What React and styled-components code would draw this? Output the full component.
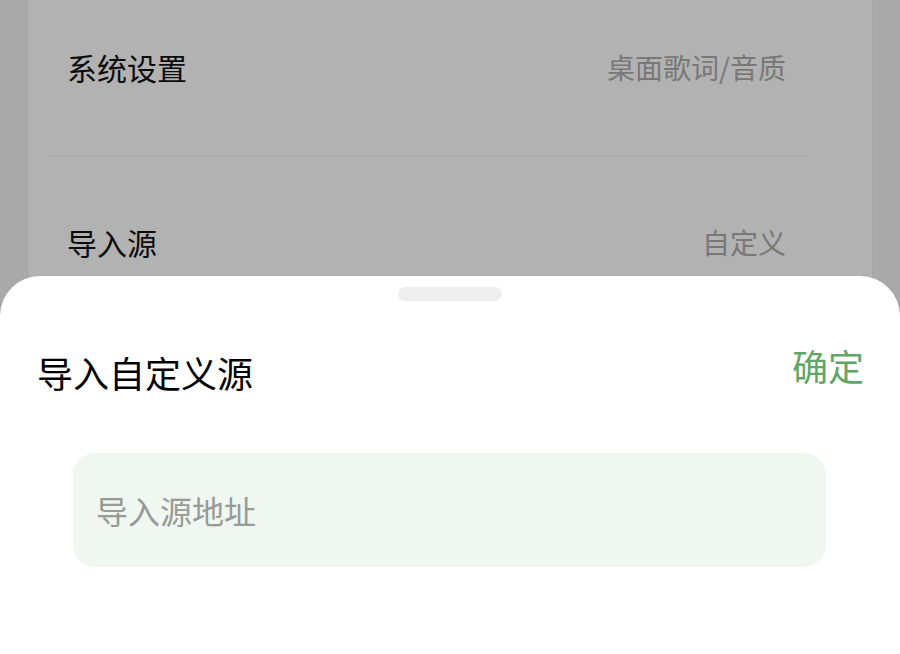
import React from "react";
import styled, { createGlobalStyle } from "styled-components";

const GlobalStyle = createGlobalStyle`
  html, body {
    margin: 0;
    padding: 0;
    height: 100%;
    overflow: hidden;
    background: #f3f3f3;
    font-family: "Noto Sans CJK SC", "Noto Sans", sans-serif;
  }
`;

const settings = [
  { label: "系统设置", value: "桌面歌词/音质" },
  { label: "导入源", value: "自定义" },
];

function App() {
  return (
    <>
      <GlobalStyle />
      <Page>
        <Card>
          {settings.map((item, i) => (
            <React.Fragment key={item.label}>
              {i > 0 && <Divider />}
              <Row first={i === 0}>
                <Label>{item.label}</Label>
                <Value>{item.value}</Value>
              </Row>
            </React.Fragment>
          ))}
        </Card>
      </Page>

      <Overlay />
      <Sheet>
        <Handle />
        <Header>
          <Title>导入自定义源</Title>
          <Confirm type="button">确定</Confirm>
        </Header>
        <Field type="text" placeholder="导入源地址" />
      </Sheet>
    </>
  );
}

const Page = styled.div`
  padding: 0 28px;
  height: 654px;
`;

const Card = styled.div`
  background: #ffffff;
  height: 100%;
  box-shadow: 0 0 0 1px #ececec;
`;

const Row = styled.div`
  display: flex;
  justify-content: space-between;
  align-items: center;
  padding: ${(p) => (p.first ? "52px 86px 73px 39px" : "70px 86px 80px 39px")};
`;

const Label = styled.span`
  font-size: 30px;
  line-height: 1;
  color: #111111;
`;

const Value = styled.span`
  font-size: 28px;
  line-height: 1;
  color: #acacac;
`;

const Divider = styled.div`
  height: 2px;
  margin: 0 66px 0 20px;
  background: #f4f4f4;
`;

const Overlay = styled.div`
  position: fixed;
  inset: 0;
  background: rgba(0, 0, 0, 0.3);
`;

const Sheet = styled.div`
  position: fixed;
  left: 0;
  right: 0;
  bottom: 0;
  top: 276px;
  background: #ffffff;
  border-radius: 40px 40px 0 0;
  display: flex;
  flex-direction: column;
  padding-top: 11px;
`;

const Handle = styled.div`
  width: 104px;
  height: 14px;
  border-radius: 7px;
  background: #eeeeee;
  margin: 0 auto;
`;

const Header = styled.div`
  display: flex;
  justify-content: space-between;
  align-items: flex-start;
  padding: 0 36px 0 37px;
  margin-top: 46px;
`;

const Title = styled.h2`
  margin: 7px 0 0;
  font-size: 36px;
  font-weight: 400;
  line-height: 1;
  color: #000000;
`;

const Confirm = styled.button`
  border: none;
  background: none;
  padding: 0;
  font-family: inherit;
  font-size: 36px;
  line-height: 1;
  color: #5fa667;
`;

const Field = styled.input`
  margin: 63px 74px 0 73px;
  height: 114px;
  box-sizing: border-box;
  border: none;
  outline: none;
  border-radius: 22px;
  background: #f0f6f0;
  padding: 0 23px;
  font-family: inherit;
  font-size: 32px;
  color: #333333;

  &::placeholder {
    color: #979b97;
  }
`;

export default App;
